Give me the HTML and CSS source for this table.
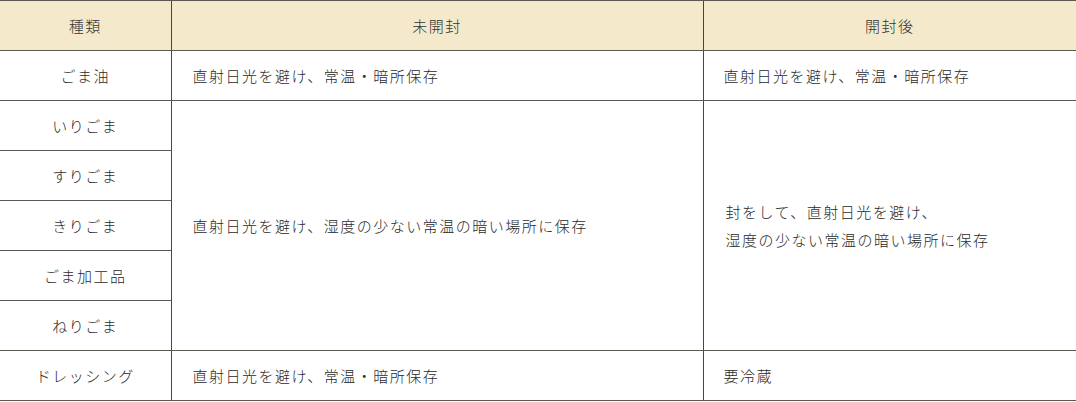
FILE: index.html
```html
<!DOCTYPE html>
<html lang="ja">
<head>
<meta charset="utf-8">
<link rel="stylesheet" href="styles.css">
</head>
<body>
<table class="storage">
  <colgroup>
    <col class="c-kind">
    <col class="c-closed">
    <col class="c-open">
  </colgroup>
  <thead>
    <tr>
      <th>種類</th>
      <th>未開封</th>
      <th>開封後</th>
    </tr>
  </thead>
  <tbody>
    <tr>
      <td class="kind">ごま油</td>
      <td>直射日光を避け、常温・暗所保存</td>
      <td>直射日光を避け、常温・暗所保存</td>
    </tr>
    <tr>
      <td class="kind">いりごま</td>
      <td rowspan="5">直射日光を避け、湿度の少ない常温の暗い場所に保存</td>
      <td rowspan="5" class="multi">封をして、直射日光を避け、<br>湿度の少ない常温の暗い場所に保存</td>
    </tr>
    <tr><td class="kind">すりごま</td></tr>
    <tr><td class="kind">きりごま</td></tr>
    <tr><td class="kind">ごま加工品</td></tr>
    <tr><td class="kind">ねりごま</td></tr>
    <tr>
      <td class="kind">ドレッシング</td>
      <td>直射日光を避け、常温・暗所保存</td>
      <td>要冷蔵</td>
    </tr>
  </tbody>
</table>
</body>
</html>
```

FILE: styles.css
```css
html, body {
  margin: 0;
  padding: 0;
  background: #ffffff;
}
body {
  font-family: "Noto Sans CJK JP", "Noto Sans", sans-serif;
  font-weight: 300;
  color: #2a2a2a;
}
.storage {
  width: 1076px;
  border-collapse: collapse;
  table-layout: fixed;
  font-size: 15px;
  letter-spacing: 1.5px;
}
.c-kind { width: 171px; }
.c-closed { width: 532px; }
.c-open { width: 373px; }
.storage th,
.storage td {
  height: 50px;
  padding: 0 20px;
  border-top: 1px solid #5d5952;
  border-bottom: 1px solid #5d5952;
  vertical-align: middle;
  text-align: left;
  line-height: 28px;
  box-sizing: border-box;
}
.storage th {
  background: #f4eacb;
  font-weight: 300;
  text-align: center;
  color: #333333;
}
.storage th + th,
.storage td + td {
  border-left: 1px solid #4a463f;
}
.storage td.kind {
  text-align: center;
  padding: 0 8px;
}
.storage td.kind + td {
  padding-left: 21px;
}
.storage td.multi {
  padding-left: 22px;
}
```
